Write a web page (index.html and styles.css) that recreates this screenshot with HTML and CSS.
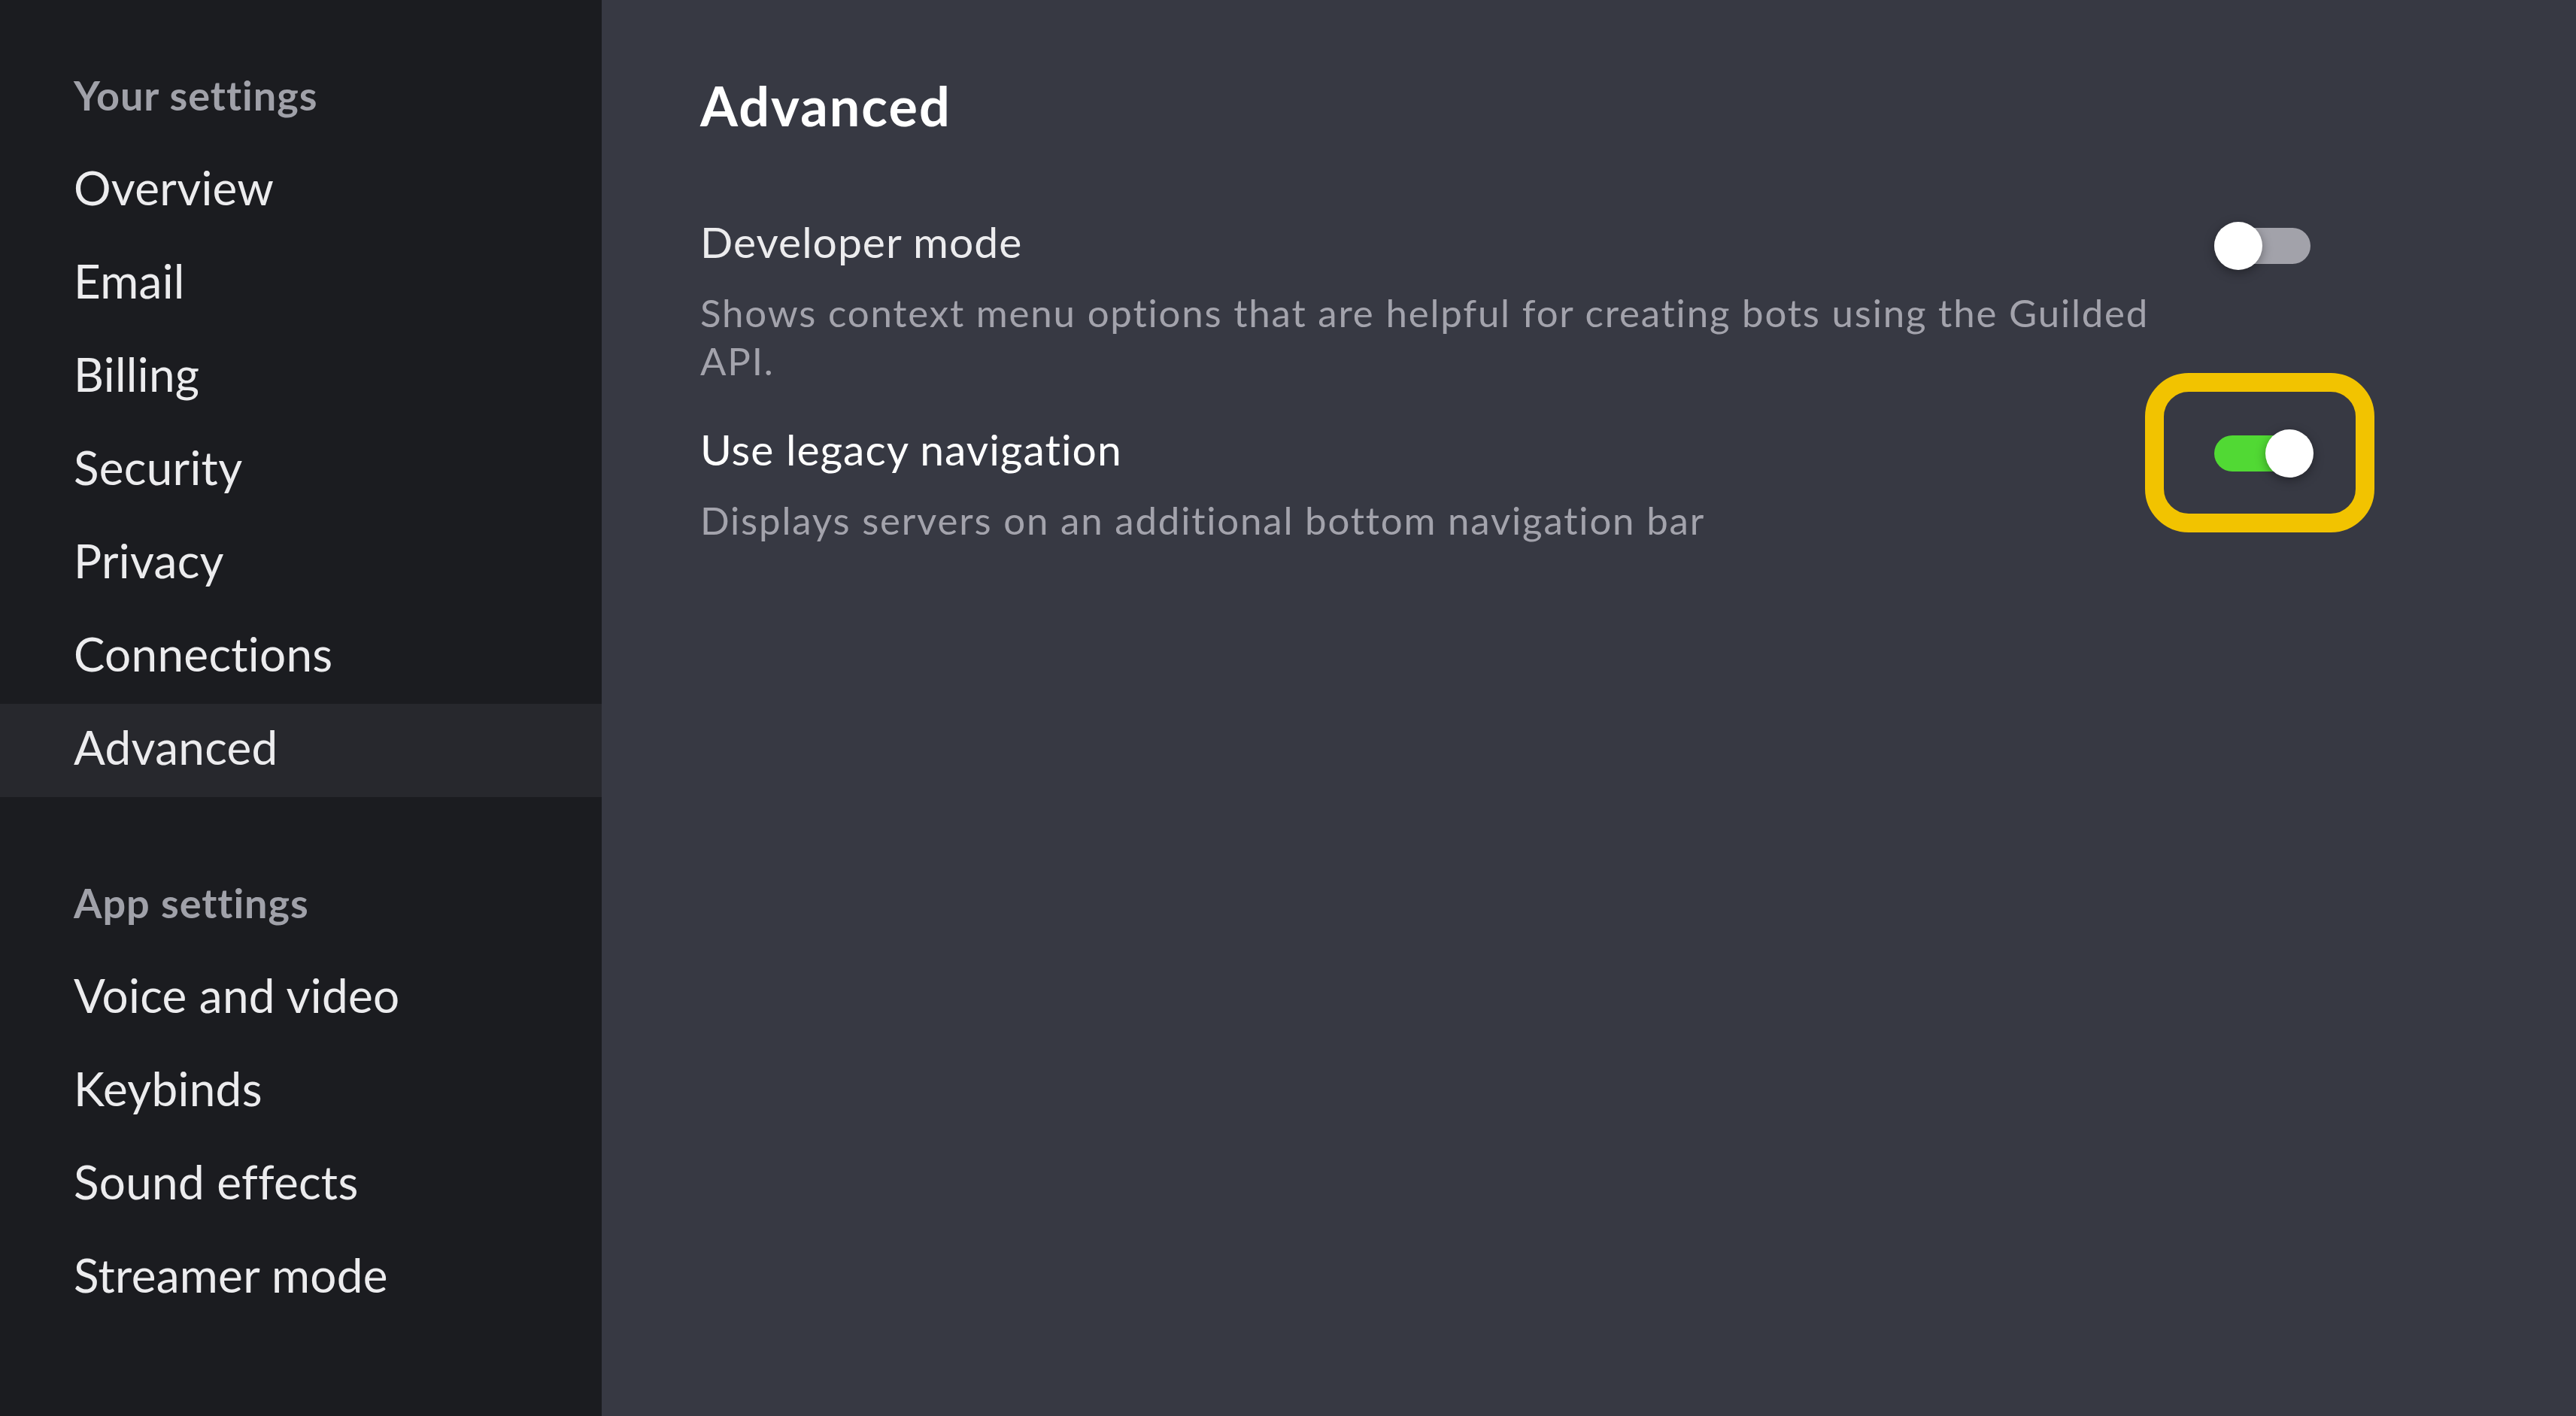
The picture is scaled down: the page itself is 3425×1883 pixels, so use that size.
FILE: index.html
```html
<!DOCTYPE html>
<html>
<head>
    <title>Settings - Advanced</title>
    <link rel="stylesheet" href="styles.css">
</head>
<body>
    <div class="app">
        <nav class="sidebar">
            <div class="nav-group">
                <div class="nav-heading">Your settings</div>
                <a class="nav-item">Overview</a>
                <a class="nav-item">Email</a>
                <a class="nav-item">Billing</a>
                <a class="nav-item">Security</a>
                <a class="nav-item">Privacy</a>
                <a class="nav-item">Connections</a>
                <a class="nav-item active">Advanced</a>
            </div>
            <div class="nav-group">
                <div class="nav-heading">App settings</div>
                <a class="nav-item">Voice and video</a>
                <a class="nav-item">Keybinds</a>
                <a class="nav-item">Sound effects</a>
                <a class="nav-item">Streamer mode</a>
            </div>
        </nav>

        <main class="content">
            <h1 class="page-title">Advanced</h1>

            <div class="setting">
                <div class="setting-text">
                    <div class="setting-title">Developer mode</div>
                    <div class="setting-desc">Shows context menu options that are helpful for creating bots using the Guilded API.</div>
                </div>
                <div class="toggle">
                    <span class="knob"></span>
                </div>
            </div>

            <div class="setting">
                <div class="setting-text">
                    <div class="setting-title bright">Use legacy navigation</div>
                    <div class="setting-desc">Displays servers on an additional bottom navigation bar</div>
                </div>
                <div class="toggle on">
                    <span class="knob"></span>
                    <span class="callout"></span>
                </div>
            </div>
        </main>
    </div>
</body>
</html>
```

FILE: styles.css
```css
body { margin: 0; font-family: Lato, "Liberation Sans", sans-serif; font-variant-ligatures: none; background: #373943; color: #ececee; }
.app { display: flex; min-height: 1883px; }

.sidebar { width: 800px; flex-shrink: 0; background: #1b1c20; padding-top: 95px; box-sizing: border-box; }
.nav-group + .nav-group { margin-top: 109px; }
.nav-heading { font-size: 54px; font-weight: bold; line-height: 1.2; letter-spacing: 1px; color: #a0a1a9; padding-left: 98px; margin-bottom: 32px; }
.nav-item { display: block; height: 124px; box-sizing: border-box; padding: 0 0 10px 98px; font-size: 62px; line-height: 114px; letter-spacing: 0.3px; color: #ececee; }
.nav-item.active { background: #27282d; }

.content { flex: 1; padding: 97px 353px 0 131px; }
.page-title { margin: 0 0 104px; font-size: 72px; line-height: 1.2; font-weight: bold; letter-spacing: 2px; color: #fff; }

.setting { display: flex; align-items: flex-start; gap: 60px; margin-bottom: 50px; }
.setting-text { flex: 1; }
.setting-title { font-size: 57px; line-height: 1.2; letter-spacing: 1px; margin-bottom: 28px; color: #ececee; }
.setting-title.bright { color: #fff; }
.setting-desc { font-size: 51px; line-height: 64.7px; letter-spacing: 1.8px; color: #a3a3ac; }

.toggle { position: relative; width: 128px; height: 48px; margin-top: 16px; border-radius: 24px; background: #a2a2aa; flex-shrink: 0; }
.toggle.on { background: #51d934; }
.knob { position: absolute; left: 0; top: -8px; width: 64px; height: 64px; border-radius: 50%; background: #fff; box-shadow: 0 4px 14px rgba(0,0,0,0.35); }
.toggle.on .knob { left: 68px; }
.callout { position: absolute; top: -83px; left: -92px; right: -85px; bottom: -81px; border: 25px solid #f2c300; border-radius: 58px; }
```
